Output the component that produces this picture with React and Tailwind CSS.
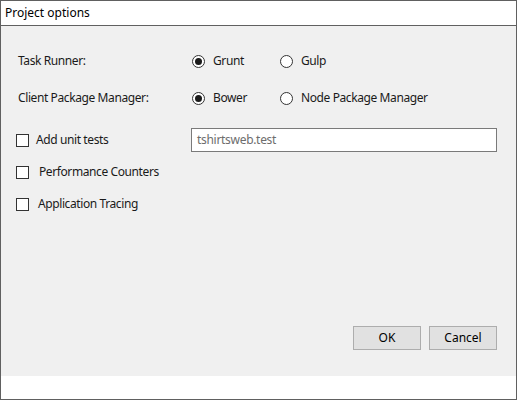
import React, { useState } from 'react';

const font = { fontFamily: '"Noto Sans", "Open Sans", sans-serif' };

function Radio({ checked, label, onClick, className = '' }) {
  return (
    <button onClick={onClick} className={`flex items-center cursor-default ${className}`}>
      <span className="w-[13px] h-[13px] rounded-full border border-[#333] bg-white flex items-center justify-center shrink-0">
        {checked && <span className="w-[7px] h-[7px] rounded-full bg-[#1a1a1a]" />}
      </span>
      <span className="ml-[8px] text-[12px] tracking-[-0.4px] text-[#1a1a1a] leading-none">{label}</span>
    </button>
  );
}

function Checkbox({ checked, label, onClick, gap }) {
  return (
    <button onClick={onClick} className="flex items-center cursor-default">
      <span className="w-[13px] h-[13px] border border-[#333] bg-white flex items-center justify-center shrink-0 text-[10px] leading-none">
        {checked ? '✓' : ''}
      </span>
      <span className={`text-[12px] tracking-[-0.4px] text-[#1a1a1a] leading-none ${gap}`}>{label}</span>
    </button>
  );
}

export default function App() {
  const [runner, setRunner] = useState('grunt');
  const [pkg, setPkg] = useState('bower');
  const [unitTests, setUnitTests] = useState(false);
  const [perf, setPerf] = useState(false);
  const [tracing, setTracing] = useState(false);

  return (
    <div style={font} className="w-[517px] h-[400px] border border-[#606060] bg-white flex flex-col select-none">
      {/* Title bar */}
      <div className="h-[25px] shrink-0 border-b border-[#606060] flex items-center pl-[4px] text-[12px] text-black">
        Project options
      </div>

      {/* Body */}
      <div className="h-[350px] shrink-0 bg-[#f0f0f0] flex flex-col pt-[23px] pb-[26px]">
        <div className="h-[24px] flex items-center">
          <span className="w-[191px] shrink-0 pl-[17px] text-[12px] tracking-[-0.4px] text-[#1a1a1a]">Task Runner:</span>
          <Radio checked={runner === 'grunt'} label="Grunt" onClick={() => setRunner('grunt')} className="w-[88px]" />
          <Radio checked={runner === 'gulp'} label="Gulp" onClick={() => setRunner('gulp')} />
        </div>

        <div className="h-[24px] mt-[13px] flex items-center">
          <span className="w-[191px] shrink-0 pl-[17px] text-[12px] tracking-[-0.4px] text-[#1a1a1a]">Client Package Manager:</span>
          <Radio checked={pkg === 'bower'} label="Bower" onClick={() => setPkg('bower')} className="w-[88px]" />
          <Radio checked={pkg === 'npm'} label="Node Package Manager" onClick={() => setPkg('npm')} />
        </div>

        <div className="h-[24px] mt-[18px] flex items-center pl-[15px]">
          <div className="w-[175px] shrink-0">
            <Checkbox checked={unitTests} label="Add unit tests" gap="ml-[7px]" onClick={() => setUnitTests(!unitTests)} />
          </div>
          <div className="w-[306px] h-[24px] border border-[#7a7a7a] bg-white flex items-center pl-[5px] text-[12px] tracking-[-0.3px] text-[#6d6d6d]">
            tshirtsweb.test
          </div>
        </div>

        <div className="h-[24px] mt-[8px] flex items-center pl-[15px]">
          <Checkbox checked={perf} label="Performance Counters" gap="ml-[10px]" onClick={() => setPerf(!perf)} />
        </div>

        <div className="h-[24px] mt-[8px] flex items-center pl-[15px]">
          <Checkbox checked={tracing} label="Application Tracing" gap="ml-[9px]" onClick={() => setTracing(!tracing)} />
        </div>

        <div className="mt-auto flex justify-end gap-[8px] pr-[19px]">
          <button className="w-[68px] h-[24px] bg-[#e1e1e1] border border-[#adadad] text-[12px] text-black cursor-default">OK</button>
          <button className="w-[68px] h-[24px] bg-[#e1e1e1] border border-[#adadad] text-[12px] text-black cursor-default">Cancel</button>
        </div>
      </div>
    </div>
  );
}
